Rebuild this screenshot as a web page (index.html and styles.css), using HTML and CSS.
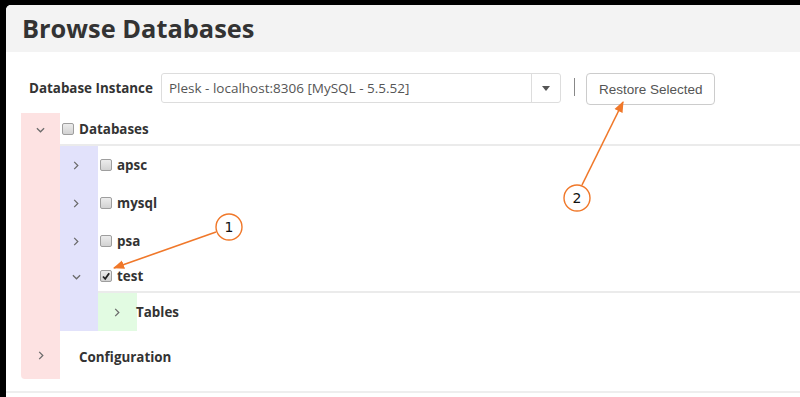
FILE: index.html
```html
<!DOCTYPE html>
<html lang="en">
<head>
    <meta charset="UTF-8">
    <meta name="viewport" content="width=device-width, initial-scale=1.0">
    <title>Browse Databases</title>
    <link rel="stylesheet" href="styles.css">
</head>
<body>
    <div class="panel">
        <div class="panel-head">
            <h1>Browse Databases</h1>
        </div>

        <div class="panel-body">
            <div class="toolbar">
                <label class="field-label">Database Instance</label>
                <div class="select">
                    <span class="select-text">Plesk - localhost:8306 [MySQL - 5.5.52]</span>
                    <span class="select-caret"><i class="caret"></i></span>
                </div>
                <span class="divider"></span>
                <button class="btn">Restore Selected</button>
            </div>

            <ul class="tree level-1">
                <li>
                    <div class="row head">
                        <span class="tog"><svg class="chev-down" viewBox="0 0 10 6"><polyline points="1,1 5,5 9,1"/></svg></span>
                        <div class="cell"><span class="cb"></span><span class="name">Databases</span></div>
                    </div>
                    <ul class="tree level-2">
                        <li class="row leaf">
                            <span class="tog shift"><svg class="chev-right" viewBox="0 0 6 10"><polyline points="1,1 5,5 1,9"/></svg></span>
                            <div class="cell"><span class="cb"></span><span class="name">apsc</span></div>
                        </li>
                        <li class="row leaf">
                            <span class="tog shift"><svg class="chev-right" viewBox="0 0 6 10"><polyline points="1,1 5,5 1,9"/></svg></span>
                            <div class="cell"><span class="cb"></span><span class="name">mysql</span></div>
                        </li>
                        <li class="row leaf">
                            <span class="tog shift"><svg class="chev-right" viewBox="0 0 6 10"><polyline points="1,1 5,5 1,9"/></svg></span>
                            <div class="cell"><span class="cb"></span><span class="name">psa</span></div>
                        </li>
                        <li>
                            <div class="row head">
                                <span class="tog shift"><svg class="chev-down" viewBox="0 0 10 6"><polyline points="1,1 5,5 9,1"/></svg></span>
                                <div class="cell">
                                    <span class="cb checked"><svg viewBox="0 0 10 10"><polyline points="2,5.5 4.2,7.8 8.2,2.2"/></svg></span>
                                    <span class="name">test</span>
                                </div>
                            </div>
                            <ul class="tree level-3">
                                <li class="row leaf">
                                    <span class="tog"><svg class="chev-right" viewBox="0 0 6 10"><polyline points="1,1 5,5 1,9"/></svg></span>
                                    <div class="cell flush"><span class="name">Tables</span></div>
                                </li>
                            </ul>
                        </li>
                    </ul>
                </li>
                <li class="row tall">
                    <span class="tog"><svg class="chev-right" viewBox="0 0 6 10"><polyline points="1,1 5,5 1,9"/></svg></span>
                    <div class="cell"><span class="cb-space"></span><span class="name">Configuration</span></div>
                </li>
            </ul>
        </div>

        <div class="panel-foot"></div>
    </div>

    <!-- callouts drawn over the screenshot -->
    <svg class="callouts" viewBox="0 0 800 397">
        <defs>
            <marker id="tip" viewBox="0 0 10 10" refX="9" refY="5" markerWidth="7" markerHeight="7" orient="auto">
                <path d="M0,1 L10,5 L0,9 z" fill="#f0782a"/>
            </marker>
        </defs>
        <line x1="216" y1="232" x2="114" y2="268" marker-end="url(#tip)"/>
        <circle cx="229" cy="227" r="13"/>
        <text x="229" y="232">1</text>
        <line x1="582" y1="185" x2="623" y2="102" marker-end="url(#tip)"/>
        <circle cx="577" cy="198" r="13"/>
        <text x="577" y="203">2</text>
    </svg>
</body>
</html>
```

FILE: styles.css
```css
* {
    box-sizing: border-box;
}

body {
    margin: 0;
    background-color: #000;
    font-family: 'Open Sans', sans-serif;
    color: #333;
    height: 397px;
    overflow: hidden;
}

.panel {
    margin: 5px 0 0 6px;
    height: 392px;
    background-color: #fff;
    border-top-left-radius: 5px;
    overflow: hidden;
}

.panel-head {
    background-color: #f3f3f3;
    padding: 6px 16px 7px;
}

h1 {
    margin: 0;
    font-size: 25.4px;
    line-height: 34px;
    font-weight: 700;
    color: #333;
}

.panel-body {
    padding: 21px 0 12px 15px;
}

.toolbar {
    display: flex;
    align-items: flex-start;
    padding-left: 8px;
}

.field-label {
    font-size: 13.4px;
    font-weight: 700;
    line-height: 30px;
    margin-right: 8px;
}

.select {
    display: flex;
    width: 400px;
    height: 30px;
    border: 1px solid #ddd;
    border-radius: 3px;
}

.select-text {
    flex: 1;
    padding-left: 7px;
    font-size: 13.5px;
    line-height: 28px;
    color: #555;
}

.select-caret {
    width: 29px;
    border-left: 1px solid #ddd;
    display: flex;
    align-items: center;
    justify-content: center;
}

.caret {
    border-top: 5px solid #555;
    border-left: 4px solid transparent;
    border-right: 4px solid transparent;
}

.divider {
    width: 1px;
    height: 18px;
    margin: 5px 11px 0 13px;
    background-color: #888;
}

.btn {
    height: 32px;
    padding: 0 12px;
    border: 1px solid #ccc;
    border-radius: 4px;
    background-color: #fff;
    font-family: 'Liberation Sans', Arial, sans-serif;
    font-size: 13.5px;
    color: #555;
}

.tree {
    list-style: none;
    margin: 0;
    padding: 0;
}

.level-1 {
    margin-top: 8px;
    background: linear-gradient(to right, #fde2e2 39px, transparent 39px);
    border-bottom-left-radius: 4px;
}

.level-2 {
    margin-left: 39px;
    background: linear-gradient(to right, #e2e2fb 38px, transparent 38px);
}

.level-3 {
    margin-left: 38px;
    background: linear-gradient(to right, #e2fbe2 39px, transparent 39px);
}

.row {
    display: flex;
    height: 38px;
}

.row.head {
    height: 33px;
}

.row.tall {
    height: 48px;
}

.tog {
    width: 39px;
    flex: none;
    display: flex;
    align-items: center;
    justify-content: center;
}

.level-2 .tog {
    width: 38px;
}

.tog.shift {
    padding-right: 6px;
}

.tog svg {
    fill: none;
    stroke: #6b6b6b;
    stroke-width: 1.4;
}

.chev-down {
    width: 9px;
    height: 6px;
}

.chev-right {
    width: 6px;
    height: 9px;
}

.cell {
    flex: 1;
    display: flex;
    align-items: center;
    padding-left: 2px;
}

.cell.flush {
    padding-left: 0;
}

.row.head .cell {
    border-bottom: 2px solid #ebebeb;
}

.row.tall .cell {
    padding-top: 3px;
}

.cb {
    width: 12px;
    height: 12px;
    margin-right: 5px;
    border: 1px solid #9e9e9e;
    border-radius: 2px;
    background: linear-gradient(#ececec, #d2d2d2);
    display: flex;
}

.cb svg {
    width: 10px;
    height: 10px;
    fill: none;
    stroke: #222;
    stroke-width: 1.8;
}

.cb-space {
    width: 17px;
}

.name {
    font-size: 13.4px;
    font-weight: 700;
    color: #333;
}

.panel-foot {
    border-top: 2px solid #eee;
    height: 20px;
}

.callouts {
    position: absolute;
    top: 0;
    left: 0;
    width: 800px;
    height: 397px;
    pointer-events: none;
}

.callouts line {
    stroke: #f0782a;
    stroke-width: 1.6;
}

.callouts circle {
    fill: #fff;
    stroke: #f0782a;
    stroke-width: 1.4;
}

.callouts text {
    font-family: 'DejaVu Sans', sans-serif;
    font-size: 14px;
    text-anchor: middle;
    fill: #111;
}
```
